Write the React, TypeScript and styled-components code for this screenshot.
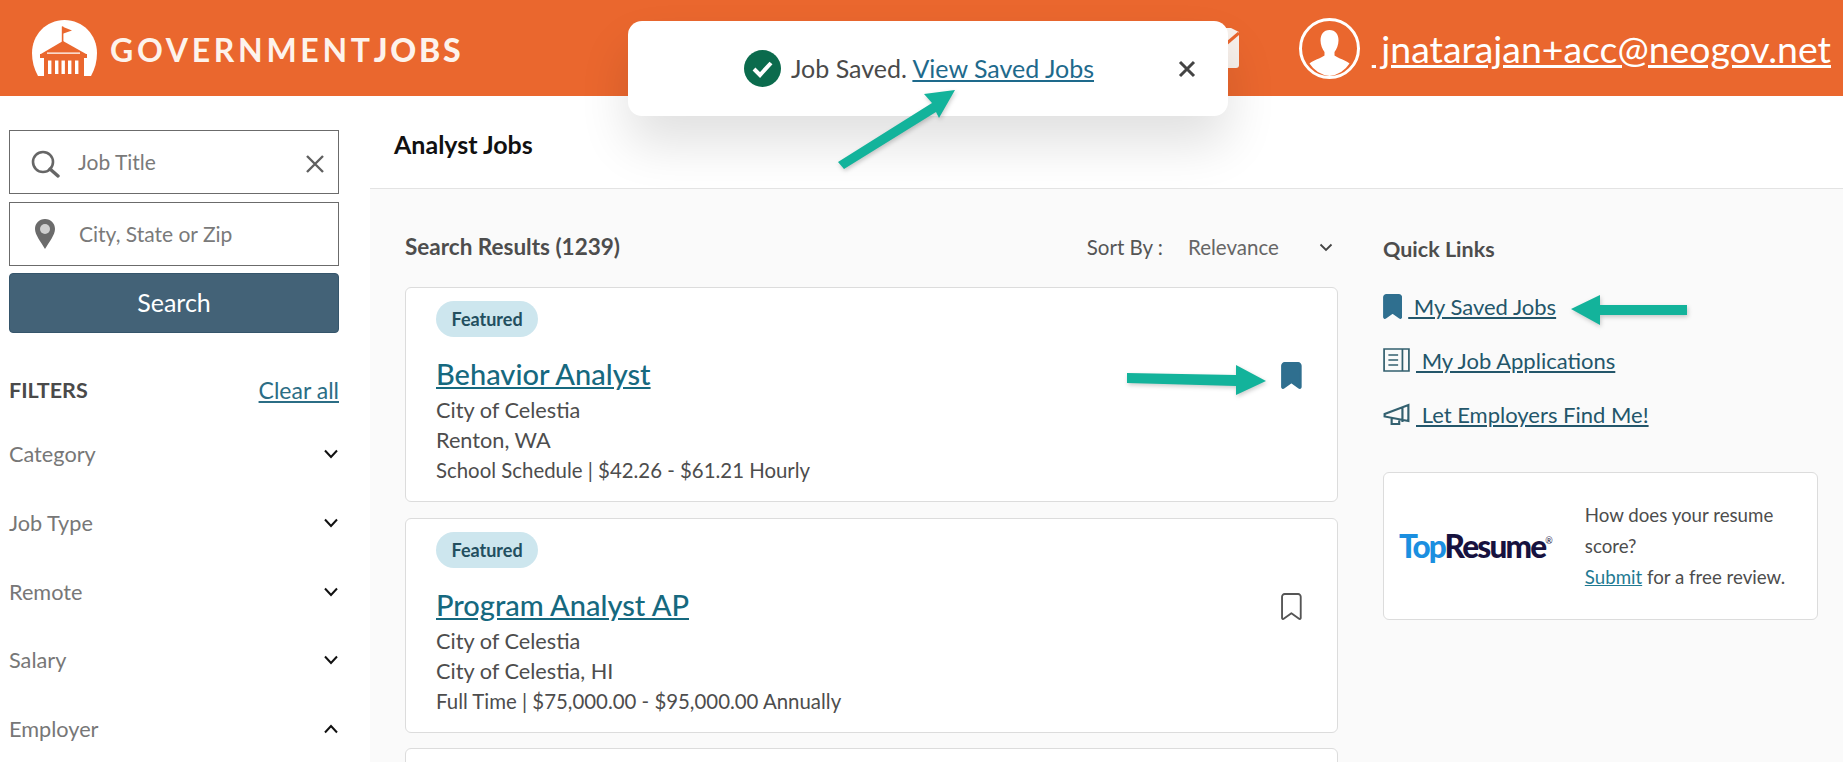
import React from "react";
import styled, { createGlobalStyle } from "styled-components";

const Global = createGlobalStyle`
  html, body {
    margin: 0;
    padding: 0;
    background: #ffffff;
  }
  * {
    box-sizing: border-box;
  }
  body {
    font-family: "Lato", "Noto Sans", sans-serif;
    color: #4a4a4a;
  }
`;

const filters = [
  { name: "Category", open: false },
  { name: "Job Type", open: false },
  { name: "Remote", open: false },
  { name: "Salary", open: false },
  { name: "Employer", open: true },
];

const jobs = [
  {
    title: "Behavior Analyst",
    employer: "City of Celestia",
    place: "Renton, WA",
    meta: "School Schedule | $42.26 - $61.21 Hourly",
    saved: true,
  },
  {
    title: "Program Analyst AP",
    employer: "City of Celestia",
    place: "City of Celestia, HI",
    meta: "Full Time | $75,000.00 - $95,000.00 Annually",
    saved: false,
  },
];

function Bookmark({ filled, size = 26 }: { filled?: boolean; size?: number }) {
  return (
    <svg width={(size * 20) / 26} height={size} viewBox="0 0 20 26">
      <path
        d="M3.5 1h13A2.5 2.5 0 0 1 19 3.5V24a1 1 0 0 1-1.6.8L10 19.5l-7.4 5.3A1 1 0 0 1 1 24V3.5A2.5 2.5 0 0 1 3.5 1z"
        fill={filled ? "#2f6f8f" : "none"}
        stroke={filled ? "#2f6f8f" : "#555"}
        strokeWidth="1.8"
        strokeLinejoin="round"
      />
    </svg>
  );
}

function Chevron({ up }: { up?: boolean }) {
  return (
    <svg width="16" height="10" viewBox="0 0 16 10">
      <path
        d={up ? "M2 8.5 8 2l6 6.5" : "M2 1.5 8 8l6-6.5"}
        fill="none"
        stroke="#111"
        strokeWidth="2"
      />
    </svg>
  );
}

function Logo() {
  return (
    <svg width="65" height="56" viewBox="0 0 65 56">
      <path
        d="M6 56C2 49 0 41 0 33 0 15 14 0 32.500 0S65 15 65 33c0 8-2 16-6 23z"
        fill="#fff"
      />
      <path d="M29.800 6.500h1.600V22h-1.600z" fill="#ea672e" />
      <path d="M30 6.500l10 4-10 3.500z" fill="#ea672e" />
      <path d="M31 21 55 34.500H8z" fill="#ea672e" />
      <path d="M15 32.500h33v1.200H15z" fill="#fff" />
      <path d="M8 34h47v4H8zM12 38h40v18H12z" fill="#ea672e" />
      <path
        d="M16 40.500h3.400V54H16zM23 40.500h3.400V54H23zM29.500 40.500h3.400V54h-3.400zM36 40.500h3.400V54H36zM43 40.500h3.400V54H43z"
        fill="#fff"
      />
    </svg>
  );
}

function Avatar() {
  return (
    <svg width="61" height="61" viewBox="0 0 61 61">
      <circle cx="30.500" cy="30.500" r="29" fill="#ea672e" stroke="#fff" strokeWidth="3" />
      <path
        d="M30.500 12c6 0 9 4.500 9 10.500 0 4.500-2 9-4 11.500v3.500c4 3 11 4.500 15 8A27.500 27.500 0 0 1 30.500 58 27.500 27.500 0 0 1 10.500 45.500c4-3.500 11-5 15-8V34c-2-2.500-4-7-4-11.500C21.500 16.500 24.500 12 30.500 12z"
        fill="#fff"
      />
    </svg>
  );
}

export default function App() {
  return (
    <Page>
      <Global />
      <Header>
        <Brand>
          <Logo />
          <BrandName>
            GOVERNMENT<b>JOBS</b>
          </BrandName>
        </Brand>
        <UserArea>
          <HeaderGlyph>
            <svg width="30" height="46" viewBox="0 0 30 46">
              <path d="M0 6h22l8 4v33a3 3 0 0 1-3 3H0z" fill="#f8f1ec" />
              <path d="M17 22 30 11" stroke="#ea672e" strokeWidth="3" />
            </svg>
          </HeaderGlyph>
          <Avatar />
          <UserLink href="#"> jnatarajan+acc@neogov.net</UserLink>
        </UserArea>
      </Header>

      <Body>
        <Sidebar>
          <SearchField>
            <FieldIcon width="30" height="30" viewBox="0 0 30 30">
              <circle cx="13" cy="13" r="10" fill="none" stroke="#666" strokeWidth="2.600" />
              <path d="M20 20l8 7" stroke="#666" strokeWidth="3.400" strokeLinecap="round" />
            </FieldIcon>
            <FieldText>Job Title</FieldText>
            <FieldIcon width="20" height="20" viewBox="0 0 20 20">
              <path d="M2 2l16 16M18 2 2 18" stroke="#5f5f5f" strokeWidth="2.400" />
            </FieldIcon>
          </SearchField>
          <SearchField>
            <PinIcon width="22" height="32" viewBox="0 0 22 32">
              <path
                d="M11 1C5 1 1 5.500 1 11c0 6 6 13 10 20 4-7 10-14 10-20C21 5.500 17 1 11 1z"
                fill="#6b6b6b"
              />
              <circle cx="11" cy="11" r="5" fill="#cfcfcf" />
            </PinIcon>
            <FieldText>City, State or Zip</FieldText>
          </SearchField>
          <SearchButton>Search</SearchButton>

          <FilterHead>
            <FilterTitle>FILTERS</FilterTitle>
            <ClearAll href="#">Clear all</ClearAll>
          </FilterHead>
          {filters.map((f) => (
            <FilterRow key={f.name}>
              <span>{f.name}</span>
              <Chevron up={f.open} />
            </FilterRow>
          ))}
        </Sidebar>

        <Main>
          <TitleBar>Analyst Jobs</TitleBar>
          <Content>
            <Results>
              <ResultsHead>
                <ResultsCount>Search Results (1239)</ResultsCount>
                <SortBox>
                  <SortLabel>Sort By :</SortLabel>
                  <SortValue>Relevance</SortValue>
                  <svg width="14" height="9" viewBox="0 0 14 9">
                    <path d="M1.500 1.500 7 7l5.500-5.500" fill="none" stroke="#444" strokeWidth="1.800" />
                  </svg>
                </SortBox>
              </ResultsHead>
              {jobs.map((job) => (
                <JobCard key={job.title}>
                  <Badge>Featured</Badge>
                  <JobRow>
                    <JobTitle href="#">{job.title}</JobTitle>
                    <SaveMark>
                      <Bookmark filled={job.saved} size={27} />
                    </SaveMark>
                  </JobRow>
                  <JobLine>{job.employer}</JobLine>
                  <JobLine>{job.place}</JobLine>
                  <JobMeta>{job.meta}</JobMeta>
                </JobCard>
              ))}
              <JobCard />
            </Results>

            <Aside>
              <AsideTitle>Quick Links</AsideTitle>
              <QuickLink>
                <Bookmark filled size={25} />
                <a href="#"> My Saved Jobs</a>
              </QuickLink>
              <QuickLink>
                <svg width="27" height="24" viewBox="0 0 25 24" preserveAspectRatio="none">
                  <path
                    d="M1 1h23v22H1zM18 1v22M5 7h9M5 12h9M5 17h9"
                    fill="none"
                    stroke="#33606f"
                    strokeWidth="1.600"
                  />
                </svg>
                <a href="#"> My Job Applications</a>
              </QuickLink>
              <QuickLink>
                <svg width="27" height="22" viewBox="0 0 25 22" preserveAspectRatio="none">
                  <path
                    d="M1.500 11 23.500 2v16L1.500 13.500zM18 4v15M8 15.500V21h7v-3.500"
                    fill="none"
                    stroke="#33606f"
                    strokeWidth="2"
                  />
                </svg>
                <a href="#"> Let Employers Find Me!</a>
              </QuickLink>
              <Promo>
                <PromoLogo>
                  <span>Top</span>Resume<sup>®</sup>
                </PromoLogo>
                <PromoText>
                  How does your resume score?
                  <br />
                  <a href="#">Submit</a> for a free review.
                </PromoText>
              </Promo>
            </Aside>
          </Content>
        </Main>
      </Body>

      <Toast>
        <svg width="37" height="37" viewBox="0 0 37 37">
          <circle cx="18.500" cy="18.500" r="18.500" fill="#0b6b4d" />
          <path d="M10 19l6 6 11-12" fill="none" stroke="#fff" strokeWidth="4" />
        </svg>
        <ToastText>
          Job Saved. <a href="#">View Saved Jobs</a>
        </ToastText>
        <ToastClose width="18" height="18" viewBox="0 0 18 18">
          <path d="M2 2l14 14M16 2 2 16" stroke="#444" strokeWidth="3" />
        </ToastClose>
      </Toast>

      <ToastArrow>
        <svg width="124" height="84" viewBox="0 0 124 84">
          <polygon points="120,2 89,6 97,15 3,74 9,81 101,24 104,30" fill="#13b39b" />
        </svg>
      </ToastArrow>
      <QuickArrow>
        <svg width="118" height="38" viewBox="0 0 118 38">
          <polygon points="1,19 30,5 30,15 117,15 117,25 30,25 30,35" fill="#13b39b" />
        </svg>
      </QuickArrow>
      <CardArrow>
        <svg width="140" height="38" viewBox="0 0 140 38">
          <polygon points="139,19 109,33 109,24 0,21 0,11 109,13 109,3" fill="#13b39b" />
        </svg>
      </CardArrow>
    </Page>
  );
}

const Page = styled.div`
  position: relative;
  width: 1843px;
  height: 762px;
  overflow: hidden;
`;

const Header = styled.header`
  height: 96px;
  background: #ea672e;
  display: flex;
  align-items: center;
  justify-content: space-between;
  padding: 0 12px 0 32px;
`;

const Brand = styled.div`
  display: flex;
  align-items: center;
  gap: 13px;
`;

const BrandName = styled.div`
  color: #fdf3ec;
  font-size: 32px;
  font-weight: 700;
  letter-spacing: 3.700px;
  padding-top: 2px;
  white-space: nowrap;
  b {
    font-weight: 900;
    letter-spacing: 2.800px;
  }
`;

const UserArea = styled.div`
  display: flex;
  align-items: center;
  gap: 12px;
`;

const HeaderGlyph = styled.div`
  margin: 0 48px 6px 0;
  display: flex;
`;

const UserLink = styled.a`
  color: #fff;
  font-size: 37.400px;
  white-space: pre;
`;

const Body = styled.div`
  display: flex;
  height: 666px;
`;

const Sidebar = styled.aside`
  width: 370px;
  flex-shrink: 0;
  padding: 34px 31px 0 9px;
`;

const SearchField = styled.div`
  height: 64px;
  border: 1px solid #6b6b6b;
  margin-bottom: 8px;
  display: flex;
  align-items: center;
  padding: 0 13px 0 20px;
  gap: 18px;
  background: #fff;
`;

const FieldIcon = styled.svg`
  flex-shrink: 0;
  margin-top: 4px;
`;

const FieldText = styled.span`
  flex: 1;
  color: #7a7a7a;
  font-size: 21px;
  padding-bottom: 2px;
`;

const PinIcon = styled.svg`
  margin: 0 5px 0 4px;
`;

const SearchButton = styled.button`
  display: block;
  width: 100%;
  height: 60px;
  margin-top: -1px;
  padding-bottom: 4px;
  border: 1px solid #35556b;
  border-radius: 4px;
  background: #436277;
  color: #fff;
  font-family: inherit;
  font-size: 25px;
`;

const FilterHead = styled.div`
  display: flex;
  justify-content: space-between;
  align-items: center;
  margin-top: 43px;
  margin-bottom: 23px;
  font-size: 21.500px;
`;

const FilterTitle = styled.span`
  font-weight: 700;
  color: #4a4a4a;
`;

const ClearAll = styled.a`
  color: #2b6d85;
  font-size: 23px;
`;

const FilterRow = styled.div`
  height: 68.700px;
  display: flex;
  justify-content: space-between;
  align-items: center;
  font-size: 21.700px;
  color: #777;
  padding-bottom: 14px;
`;

const Main = styled.main`
  flex: 1;
  min-width: 0;
  background: #fafafa;
`;

const TitleBar = styled.div`
  height: 93px;
  background: #fff;
  border-bottom: 1px solid #e3e3e3;
  display: flex;
  align-items: center;
  padding: 4px 0 0 24px;
  font-size: 25px;
  font-weight: 700;
  color: #111;
`;

const Content = styled.div`
  display: flex;
  padding: 39px 25px 0 35px;
  gap: 45px;
`;

const Results = styled.div`
  width: 933px;
  flex-shrink: 0;
`;

const ResultsHead = styled.div`
  display: flex;
  justify-content: space-between;
  align-items: center;
  height: 36px;
  margin-bottom: 23px;
`;

const ResultsCount = styled.div`
  font-size: 22.500px;
  font-weight: 700;
  color: #4d4d4d;
`;

const SortBox = styled.div`
  display: flex;
  align-items: center;
  padding: 2px 5px 0 0;
`;

const SortLabel = styled.span`
  font-size: 20.500px;
  color: #555;
  margin-right: 25px;
`;

const SortValue = styled.span`
  font-size: 20.500px;
  color: #666;
  width: 131px;
`;

const JobCard = styled.article`
  background: #fff;
  border: 1px solid #dcdcdc;
  border-radius: 6px;
  height: 215px;
  margin-bottom: 15.500px;
  padding: 13px 35px 0 30px;
`;

const Badge = styled.span`
  display: inline-flex;
  align-items: center;
  height: 36px;
  padding: 0 15.500px;
  border-radius: 18px;
  background: #cde6ee;
  color: #234f5f;
  font-size: 18px;
  font-weight: 700;
`;

const JobRow = styled.div`
  display: flex;
  justify-content: space-between;
  align-items: center;
  margin-top: 19px;
  margin-bottom: 4px;
`;

const JobTitle = styled.a`
  color: #16697f;
  font-size: 29px;
  font-weight: 500;
`;

const SaveMark = styled.div`
  display: flex;
  margin-top: 4px;
`;

const JobLine = styled.div`
  color: #4d4d4d;
  font-size: 21.700px;
  line-height: 30px;
`;

const JobMeta = styled.div`
  color: #4d4d4d;
  font-size: 20.400px;
  line-height: 30px;
`;

const Aside = styled.div`
  flex: 1;
  min-width: 0;
`;

const AsideTitle = styled.div`
  font-size: 21.500px;
  font-weight: 700;
  color: #4d4d4d;
  height: 36px;
  display: flex;
  align-items: center;
  margin-top: 3px;
  margin-bottom: 12px;
`;

const QuickLink = styled.div`
  display: flex;
  align-items: center;
  height: 54px;
  gap: 6px;
  font-size: 22px;
  a {
    color: #23566a;
    white-space: pre;
  }
`;

const Promo = styled.div`
  margin-top: 31px;
  height: 148px;
  background: #fff;
  border: 1px solid #dcdcdc;
  border-radius: 6px;
  display: flex;
  align-items: center;
  padding: 0 20px 0 15px;
  gap: 32px;
`;

const PromoLogo = styled.div`
  font-size: 31.500px;
  font-weight: 900;
  letter-spacing: -1.800px;
  color: #17123f;
  white-space: nowrap;
  span {
    color: #1b8fe0;
  }
  sup {
    font-size: 9px;
    font-weight: 400;
    vertical-align: 14px;
    line-height: 0;
    letter-spacing: 0;
  }
`;

const PromoText = styled.div`
  font-size: 18.700px;
  line-height: 31px;
  color: #4d4d4d;
  a {
    color: #1f7a92;
  }
`;

const Toast = styled.div`
  position: absolute;
  left: 628px;
  top: 21px;
  width: 600px;
  height: 95px;
  background: #fff;
  border-radius: 14px;
  box-shadow: 0 28px 50px rgba(0, 0, 0, 0.12);
  display: flex;
  align-items: center;
  padding-left: 116px;
  gap: 10px;
`;

const ToastText = styled.div`
  font-size: 25px;
  color: #4a4a4a;
  white-space: pre;
  padding-bottom: 2px;
  a {
    color: #1e6a8c;
  }
`;

const ToastClose = styled.svg`
  position: absolute;
  right: 32px;
  top: 39px;
`;

const ToastArrow = styled.div`
  position: absolute;
  left: 835px;
  top: 88px;
  display: flex;
  filter: drop-shadow(1px 2px 2px rgba(0, 0, 0, 0.2));
`;

const QuickArrow = styled.div`
  position: absolute;
  left: 1570px;
  top: 290px;
  display: flex;
  filter: drop-shadow(1px 2px 2px rgba(0, 0, 0, 0.2));
`;

const CardArrow = styled.div`
  position: absolute;
  left: 1127px;
  top: 362px;
  display: flex;
  filter: drop-shadow(1px 2px 2px rgba(0, 0, 0, 0.2));
`;
